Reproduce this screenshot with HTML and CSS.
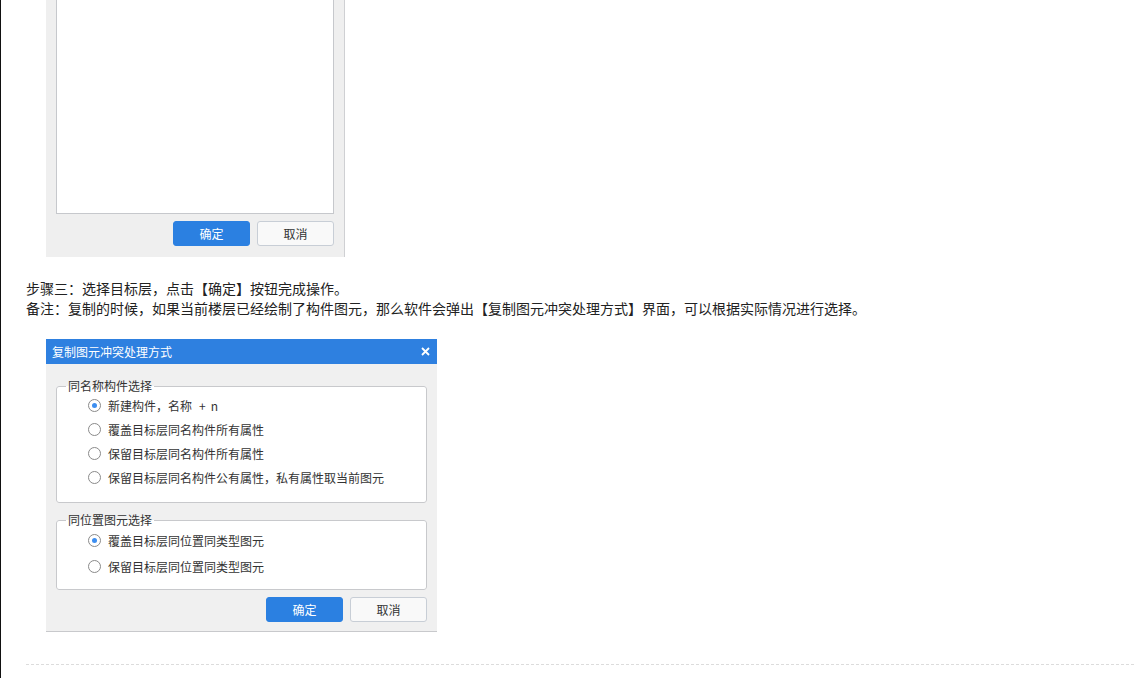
FILE: index.html
```html
<!DOCTYPE html>
<html lang="zh-CN">
<head>
<meta charset="utf-8">
<title>复制图元</title>
<link rel="stylesheet" href="styles.css">
</head>
<body>
<div class="page">
  <div class="shot1">
    <div class="listbox"></div>
    <div class="btnrow">
      <span class="btn primary">确定</span>
      <span class="btn">取消</span>
    </div>
  </div>

  <p class="para first">步骤三：选择目标层，点击【确定】按钮完成操作。</p>
  <p class="para">备注：复制的时候，如果当前楼层已经绘制了构件图元，那么软件会弹出【复制图元冲突处理方式】界面，可以根据实际情况进行选择。</p>

  <div class="dialog">
    <div class="titlebar">
      <span class="title">复制图元冲突处理方式</span>
      <svg class="close" width="9" height="9" viewBox="0 0 9 9"><path d="M1 1L8 8M8 1L1 8" stroke="#fff" stroke-width="1.8" fill="none"/></svg>
    </div>
    <div class="dbody">
      <fieldset class="group g1">
        <legend>同名称构件选择</legend>
        <div class="opt"><span class="radio on"></span>新建构件，名称<span class="plus">+</span>n</div>
        <div class="opt"><span class="radio"></span>覆盖目标层同名构件所有属性</div>
        <div class="opt"><span class="radio"></span>保留目标层同名构件所有属性</div>
        <div class="opt"><span class="radio"></span>保留目标层同名构件公有属性，私有属性取当前图元</div>
      </fieldset>
      <fieldset class="group g2">
        <legend>同位置图元选择</legend>
        <div class="opt"><span class="radio on"></span>覆盖目标层同位置同类型图元</div>
        <div class="opt"><span class="radio"></span>保留目标层同位置同类型图元</div>
      </fieldset>
      <div class="btnrow dbtns">
        <span class="btn primary">确定</span>
        <span class="btn">取消</span>
      </div>
    </div>
  </div>

  <div class="divider"></div>
</div>
</body>
</html>
```

FILE: styles.css
```css
html, body {
  margin: 0;
  padding: 0;
  background: #fff;
}
body {
  font-family: "Noto Sans CJK SC", "Microsoft YaHei", sans-serif;
  color: #333;
}
.page {
  border-left: 1px solid #111;
  min-height: 678px;
  padding-left: 25px;
  overflow: hidden;
  box-sizing: border-box;
}
.shot1 {
  margin-left: 20px;
  width: 299px;
  height: 257px;
  background: #efefef;
  border-right: 1px solid #cfd0d3;
  padding-left: 10px;
  box-sizing: border-box;
  display: flex;
  flex-direction: column;
}
.listbox {
  width: 278px;
  height: 214px;
  background: #fff;
  border: 1px solid #c6c8cc;
  border-top: none;
  box-sizing: border-box;
}
.btnrow {
  display: flex;
  justify-content: flex-end;
  gap: 7px;
  width: 278px;
  margin-top: 7px;
}
.btn {
  width: 77px;
  height: 25px;
  box-sizing: border-box;
  border: 1px solid #c8ced6;
  border-radius: 3px;
  background: #f9f9f9;
  font-size: 12px;
  line-height: 23px;
  text-align: center;
  color: #333;
}
.btn.primary {
  background: #2b80e1;
  border-color: #2b80e1;
  color: #fff;
}
.para {
  margin: 0;
  font-size: 14px;
  line-height: 20px;
  color: #222;
}
.para.first {
  margin-top: 21px;
}
.dialog {
  margin: 21px 0 0 20px;
  width: 391px;
  background: #f0f0f0;
  border-bottom: 1px solid #c8c9cc;
}
.titlebar {
  height: 25px;
  background: #2e80e0;
  display: flex;
  align-items: center;
  justify-content: space-between;
  padding: 0 7px 0 6px;
}
.title {
  color: #fff;
  font-size: 12px;
  line-height: 25px;
}
.close {
  display: block;
}
.dbody {
  padding: 0 10px 9px;
}
.group {
  margin: 0;
  padding: 0;
  border: 1px solid #c8c9cc;
  border-radius: 3px;
  background: #fff;
  min-width: 0;
}
.group legend {
  margin-left: 9px;
  padding: 0 2px;
  font-size: 12px;
  line-height: 14px;
  color: #333;
}
.g1 {
  margin-top: 15px;
  padding-bottom: 13px;
}
.g1 .opt {
  height: 24px;
}
.g2 {
  margin-top: 10px;
  padding-bottom: 10px;
}
.g2 .opt {
  height: 26px;
}
.opt {
  display: flex;
  align-items: center;
  padding-left: 31px;
  font-size: 12px;
  color: #333;
}
.plus {
  margin: 0 5px 0 7px;
}
.radio {
  width: 13px;
  height: 13px;
  box-sizing: border-box;
  border: 1px solid #8a8a8a;
  border-radius: 50%;
  background: #fff;
  margin-right: 7px;
  position: relative;
  flex: none;
}
.radio.on::after {
  content: "";
  position: absolute;
  left: 3px;
  top: 3px;
  width: 5px;
  height: 5px;
  border-radius: 50%;
  background: #3d8ef0;
}
.dbtns {
  width: auto;
  margin-top: 7px;
}
.divider {
  margin-top: 32px;
  border-top: 1px dashed #dcdcdc;
}
```
